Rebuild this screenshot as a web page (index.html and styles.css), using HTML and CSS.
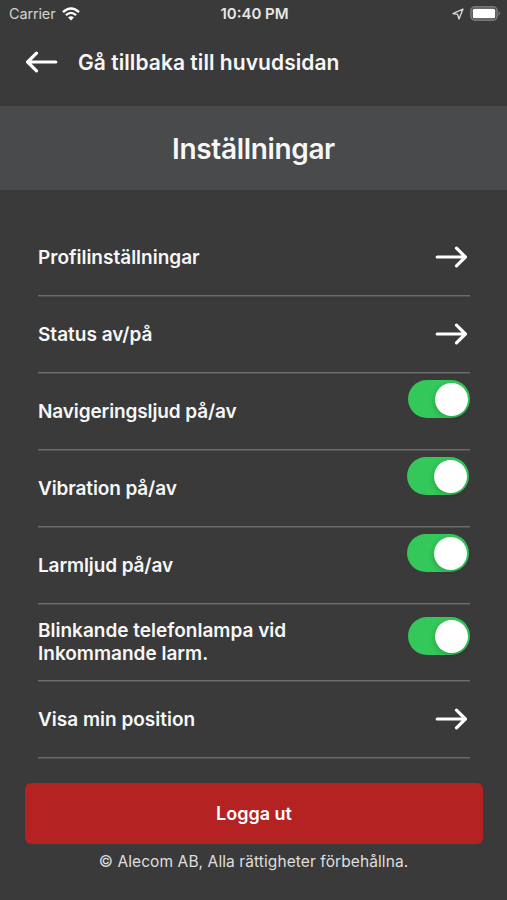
FILE: index.html
```html
<!DOCTYPE html>
<html lang="sv">
<head>
<meta charset="utf-8">
<title>Inställningar</title>
<link rel="stylesheet" href="styles.css">
</head>
<body>
<svg class="defs" width="0" height="0" aria-hidden="true">
  <symbol id="arrow" viewBox="0 0 32 22"><path d="M2.200 11H30M21.500 2.200L30.400 11L21.500 19.800" fill="none" stroke="currentColor" stroke-width="3.200" stroke-linecap="round" stroke-linejoin="miter"/></symbol>
</svg>
<div class="screen">
  <div class="status">
    <div class="status-left">
      <span class="carrier">Carrier</span>
      <svg class="wifi" width="18" height="14" viewBox="0 0 18 14" fill="none" stroke="currentColor"><path d="M1 5.100Q9-2.200 17 5.100" stroke-width="2.500"/><path d="M3.900 8.100Q9 3.600 14.100 8.100" stroke-width="2.300"/><path d="M6.100 10.400Q9 8 11.900 10.400L9 13.500Z" fill="currentColor" stroke="none"/></svg>
    </div>
    <span class="time">10:40 PM</span>
    <div class="status-right">
      <svg width="12" height="12" viewBox="0 0 12 12" fill="none" stroke="currentColor" stroke-width="1.300" stroke-linejoin="round"><path d="M11 1L1 5.600L5.600 6.400L7 11Z"/></svg>
      <svg width="31" height="15" viewBox="0 0 31 15"><rect x=".9" y=".9" width="26.200" height="13.200" rx="4" fill="none" stroke="#777" stroke-width="1.700"/><rect x="2.800" y="2.800" width="22.400" height="9.400" rx="1.500" fill="#fff"/><path d="M28.600 5Q31.600 7.500 28.600 10Z" fill="#777"/></svg>
    </div>
  </div>
  <header class="back">
    <svg class="arrow flip"><use href="#arrow"/></svg>
    <span class="back-label">Gå tillbaka till huvudsidan</span>
  </header>
  <h1 class="title"><span>Inställningar</span></h1>
  <main class="list">
    <div class="row"><span>Profilinställningar</span><svg class="arrow"><use href="#arrow"/></svg></div>
    <div class="row"><span>Status av/på</span><svg class="arrow"><use href="#arrow"/></svg></div>
    <div class="row raised tight"><span>Navigeringsljud på/av</span><i class="switch"></i></div>
    <div class="row raised tight inset"><span>Vibration på/av</span><i class="switch"></i></div>
    <div class="row raised tight inset"><span>Larmljud på/av</span><i class="switch"></i></div>
    <div class="row lamp"><span>Blinkande telefonlampa vid<br>Inkommande larm.</span><i class="switch"></i></div>
    <div class="row"><span>Visa min position</span><svg class="arrow"><use href="#arrow"/></svg></div>
  </main>
  <button class="logout"><span>Logga ut</span></button>
  <footer class="copy"><span>© Alecom AB, Alla rättigheter förbehållna.</span></footer>
</div>
</body>
</html>
```
FILE: styles.css
```css
* { box-sizing: border-box; }
body { margin: 0; background: #3a3a3a; color: #f7f7f7; font-family: Inter, sans-serif; }
.defs { display: block; }
.screen { width: 507px; height: 900px; display: flex; flex-direction: column; overflow: hidden; }
.status { height: 27px; display: grid; grid-template-columns: 1fr auto 1fr; align-items: center; padding: 0 6px 0 9px; flex: none; }
.status-left { display: flex; align-items: center; gap: 7px; }
.status-right { display: flex; align-items: center; justify-content: flex-end; gap: 6px; }
.carrier { font-size: 14.5px; color: #d2d2d2; letter-spacing: -.15px; }
.wifi { color: #fff; }
.time { font-size: 15px; font-weight: 600; color: #e6e6e6; margin-left: -1px; }
.status-right { color: #ddd; }
.back { height: 79px; flex: none; display: flex; align-items: center; gap: 20px; padding: 0 26px 9px; }
.back-label { font-size: 21px; font-weight: 600; letter-spacing: .06px; }
.arrow { width: 32px; height: 22px; flex: none; color: #fff; }
.flip { transform: scaleX(-1); }
.title { margin: 0; padding-top: 2px; height: 84px; flex: none; display: flex; align-items: center; justify-content: center; background: #484a4b; font-size: 28px; font-weight: 600; letter-spacing: -.35px; }
.list { margin: 29px 37px 0 38px; }
.row { height: 77px; display: flex; align-items: center; justify-content: space-between; border-bottom: 1px solid #6c6c6c; box-shadow: 0 1px #505050; padding-right: 3px; font-size: 19px; font-weight: 600; line-height: 23px; }
.row > span { padding-top: 1px; }
.tight { letter-spacing: -.12px; }
.raised, .lamp { padding-right: 0; }
.inset { padding-right: 1px; }
.switch { display: block; width: 62px; height: 38px; border-radius: 19px; background: #34c759; padding: 2px; flex: none; }
.switch::after { content: ""; display: block; width: 33px; height: 33px; margin-left: 25px; margin-top: 1px; border-radius: 50%; background: #fff; box-shadow: -1px 2px 5px rgba(0,0,0,.16); }
.raised .switch { margin-bottom: 24px; }
.lamp > span { margin-bottom: 2px; }
.lamp .switch { margin-bottom: 12px; }
.logout { margin: 25px 24px 0 25px; height: 61px; flex: none; border: 0; border-radius: 6px; background: #b42222; color: #fff; font: 600 18px Inter, sans-serif; }
.copy { height: 35px; display: flex; align-items: center; justify-content: center; font-size: 15.5px; letter-spacing: .09px; color: #dfdfdf; }
```
